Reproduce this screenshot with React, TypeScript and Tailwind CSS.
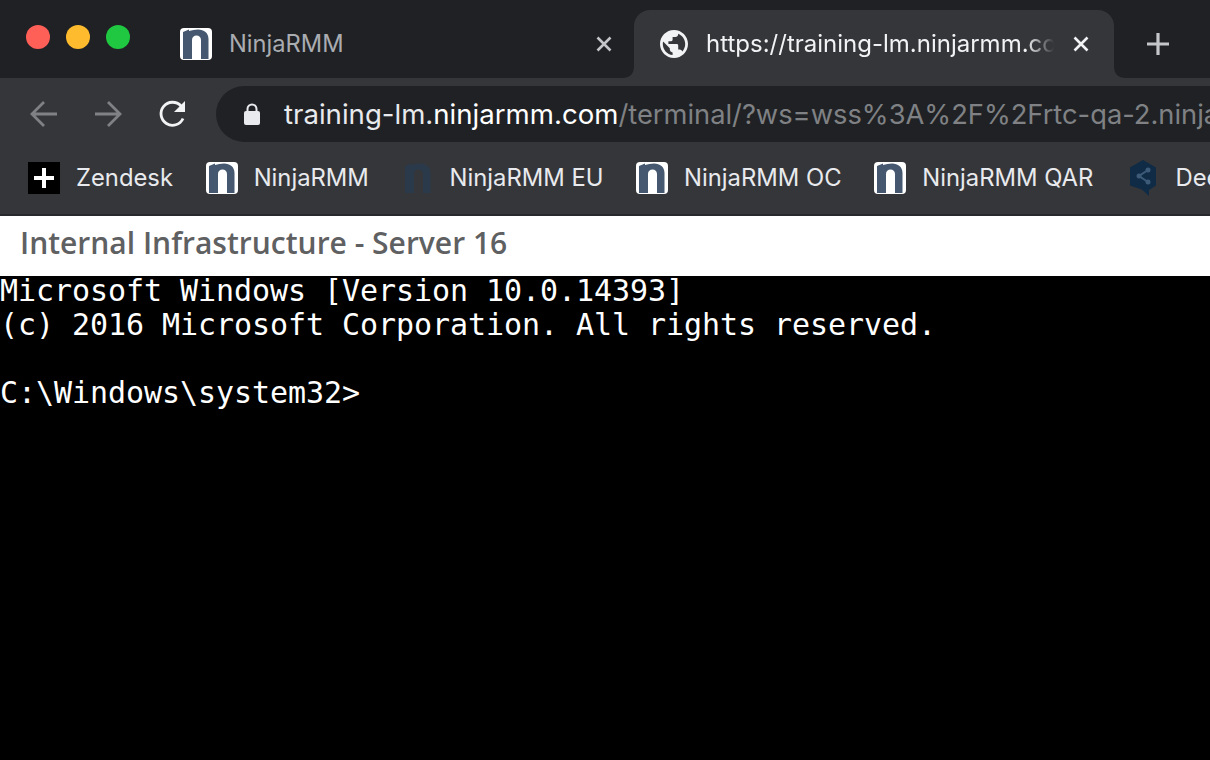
import React from 'react';

const NinjaIcon = ({ dim = false }: { dim?: boolean }) => (
  <svg width="32" height="32" viewBox="0 0 32 32" className="shrink-0">
    {!dim && <rect width="32" height="32" rx="4" fill="#fff" />}
    <path
      d="M3 31V4l6-2.500V3c3-1 6-1.500 9-1.500 6 0 10.500 3.500 10.500 9.500v20H21V12c0-3-2-4.500-4.500-4.500S12 9 12 12v19z"
      fill={dim ? '#2b3a4b' : '#45586f'}
    />
  </svg>
);

const Bookmark = ({ icon, label }: { icon: React.ReactNode; label: string }) => (
  <div className="flex items-center gap-[16px] shrink-0">
    {icon}
    <span className="text-[23.8px] text-[#e8eaed] whitespace-nowrap">{label}</span>
  </div>
);

const CloseIcon = ({ color }: { color: string }) => (
  <svg width="18" height="18" viewBox="0 0 18 18" className="shrink-0">
    <path d="M2.500 2.500l13 13M15.500 2.500l-13 13" stroke={color} strokeWidth="2.600" />
  </svg>
);

const App = () => {
  return (
    <div className="w-[1210px] h-[760px] overflow-hidden bg-black flex flex-col font-['Inter',sans-serif]">
      {/* tab strip */}
      <div className="h-[78px] bg-[#202124] flex shrink-0 pl-[26px]">
        <div className="flex items-center gap-[16px] h-[74px]">
          <div className="w-[24px] h-[24px] rounded-full bg-[#fe5f57]" />
          <div className="w-[24px] h-[24px] rounded-full bg-[#febb2e]" />
          <div className="w-[24px] h-[24px] rounded-full bg-[#1fc840]" />
        </div>
        <div className="w-[454px] ml-[50px] h-[78px] pt-[10px] flex items-center shrink-0 pr-[21px]">
          <NinjaIcon />
          <span className="ml-[17px] text-[23.7px] text-[#a9acb1] flex-1">NinjaRMM</span>
          <CloseIcon color="#c4c6ca" />
        </div>
        <div className="relative w-[480px] h-[68px] mt-[10px] bg-[#35363a] rounded-t-[16px] flex items-center pl-[26px] pr-[24px] shrink-0">
          <svg width="12" height="12" viewBox="0 0 12 12" className="absolute -left-[12px] bottom-0">
            <path d="M0 12C8 12 12 8 12 0v12z" fill="#35363a" />
          </svg>
          <svg width="12" height="12" viewBox="0 0 12 12" className="absolute -right-[12px] bottom-0">
            <path d="M12 12C4 12 0 8 0 0v12z" fill="#35363a" />
          </svg>
          <svg width="28" height="28" viewBox="2 2 20 20" className="shrink-0">
            <path
              fillRule="evenodd"
              d="M12 2C6.480 2 2 6.480 2 12s4.480 10 10 10 10-4.480 10-10S17.520 2 12 2zm-1 17.930c-3.950-.490-7-3.850-7-7.930 0-.620.080-1.210.210-1.790L9 15v1c0 1.100.900 2 2 2v1.930zm6.900-2.540c-.260-.810-1-1.390-1.900-1.390h-1v-3c0-.550-.450-1-1-1H8v-2h2c.550 0 1-.450 1-1V7h2c1.100 0 2-.900 2-2v-.410c2.930 1.190 5 4.060 5 7.410 0 2.080-.800 3.970-2.100 5.390z"
              fill="#f1f3f4"
            />
          </svg>
          <span className="ml-[18px] w-[348px] overflow-hidden whitespace-nowrap text-[24px] text-[#f1f3f4] [mask-image:linear-gradient(to_right,black_92%,transparent)]">
            https://training-lm.ninjarmm.com
          </span>
          <div className="ml-[18px]">
            <CloseIcon color="#f1f3f4" />
          </div>
        </div>
        <div className="ml-[32px] mt-[10px] flex items-center">
          <svg width="24" height="24" viewBox="0 0 24 24">
            <path d="M12 1v22M1 12h22" stroke="#c4c6ca" strokeWidth="3.200" />
          </svg>
        </div>
      </div>

      {/* toolbar */}
      <div className="h-[72px] bg-[#35363a] flex items-center shrink-0 pl-[30px] pr-0">
        <svg width="28" height="28" viewBox="0 0 28 28" className="shrink-0">
          <path d="M27 14H2M14 2L2 14l12 12" fill="none" stroke="#808184" strokeWidth="2.800" />
        </svg>
        <svg width="28" height="28" viewBox="0 0 28 28" className="shrink-0 ml-[36px]">
          <path d="M1 14h25M14 2l12 12-12 12" fill="none" stroke="#808184" strokeWidth="2.800" />
        </svg>
        <svg width="30" height="30" viewBox="0 0 30 30" className="shrink-0 ml-[36px]">
          <path d="M25 19.500A11.500 11.500 0 1 1 23 7" fill="none" stroke="#f1f3f4" strokeWidth="2.800" />
          <path d="M27 2v11H16z" fill="#f1f3f4" />
        </svg>
        <div className="ml-[28px] flex-1 h-[56px] bg-[#202124] rounded-l-[28px] flex items-center pl-[28px] overflow-hidden">
          <svg width="16" height="22" viewBox="0 0 16 22" className="shrink-0">
            <rect x="0" y="8" width="16" height="14" rx="2" fill="#e8eaed" />
            <path d="M3.500 9V6a4.500 4.500 0 0 1 9 0v3" fill="none" stroke="#e8eaed" strokeWidth="2" />
          </svg>
          <span className="ml-[24px] mt-[2px] text-[27.3px] whitespace-nowrap text-[#7f8184]">
            <span className="text-[27.6px] text-[#e8eaed]">training-lm.</span>
            <span className="text-[27.6px] text-white">ninjarmm.com</span>
            /terminal/?ws=wss%3A%2F%2Frtc-qa-2.ninjarmm.com
          </span>
        </div>
      </div>

      {/* bookmarks */}
      <div className="h-[66px] bg-[#35363a] border-b-2 border-[#28292c] flex items-center shrink-0 pl-[28px] pb-[8px] gap-[32.7px] overflow-hidden">
        <Bookmark
          icon={
            <div className="w-[32px] h-[32px] bg-black flex items-center justify-center shrink-0">
              <svg width="22" height="22" viewBox="0 0 22 22">
                <path d="M11 1v20M1 11h20" stroke="#fff" strokeWidth="4" />
              </svg>
            </div>
          }
          label="Zendesk"
        />
        <Bookmark icon={<NinjaIcon />} label="NinjaRMM" />
        <Bookmark icon={<NinjaIcon dim />} label="NinjaRMM EU" />
        <Bookmark icon={<NinjaIcon />} label="NinjaRMM OC" />
        <Bookmark icon={<NinjaIcon />} label="NinjaRMM QAR" />
        <Bookmark
          icon={
            <svg width="30" height="36" viewBox="0 0 30 36" className="shrink-0 ml-[3.500px]">
              <path d="M14 0l13 7.500v18L20 30v6l-7-6.500L1 25.500v-18z" fill="#0f2b46" />
              <path d="M19 10l-9 6 9 6" fill="none" stroke="#3d5a78" strokeWidth="2" />
              <circle cx="19" cy="10" r="2.500" fill="#3d5a78" />
              <circle cx="10" cy="16" r="2.500" fill="#3d5a78" />
              <circle cx="19" cy="22" r="2.500" fill="#3d5a78" />
            </svg>
          }
          label="DeepL"
        />
      </div>

      {/* page header */}
      <div className="h-[60px] bg-white flex items-center pl-[20px] pb-[8px] shrink-0">
        <span className="font-['Open_Sans',sans-serif] font-semibold text-[30px] text-[#5f6062]">
          Internal Infrastructure - Server 16
        </span>
      </div>

      {/* terminal */}
      <div className="flex-1 bg-black text-white font-['DejaVu_Sans_Mono',monospace] text-[30px] tracking-[-0.06px] leading-[34px] whitespace-pre">
        <div className="h-[32px] leading-[30px]">Microsoft Windows [Version 10.0.14393]</div>
        <div>(c) 2016 Microsoft Corporation. All rights reserved.</div>
        <div>&nbsp;</div>
        <div>C:\Windows\system32&gt;</div>
      </div>
    </div>
  );
};

export default App;
